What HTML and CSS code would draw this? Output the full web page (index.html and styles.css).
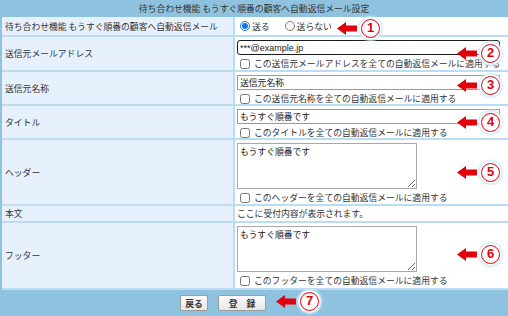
FILE: index.html
```html
<!DOCTYPE html>
<html lang="ja">
<head>
<meta charset="utf-8">
<link rel="stylesheet" href="styles.css">
</head>
<body>
<div class="page">
  <div class="title">待ち合わせ機能 もうすぐ順番の顧客へ自動返信メール設定</div>
  <div class="form">
    <div class="label">待ち合わせ機能 もうすぐ順番の顧客へ自動返信メール</div>
    <div class="field inline">
      <label class="opt"><input type="radio" name="send" checked>送る</label>
      <label class="opt"><input type="radio" name="send">送らない</label>
    </div>

    <div class="label">送信元メールアドレス</div>
    <div class="field">
      <input class="text focus" type="text" value="***@example.jp">
      <label class="chk"><input type="checkbox">この送信元メールアドレスを全ての自動返信メールに適用する</label>
    </div>

    <div class="label">送信元名称</div>
    <div class="field">
      <input class="text" type="text" value="送信元名称">
      <label class="chk"><input type="checkbox">この送信元名称を全ての自動返信メールに適用する</label>
    </div>

    <div class="label">タイトル</div>
    <div class="field">
      <input class="text" type="text" value="もうすぐ順番です">
      <label class="chk"><input type="checkbox">このタイトルを全ての自動返信メールに適用する</label>
    </div>

    <div class="label">ヘッダー</div>
    <div class="field">
      <textarea class="area">もうすぐ順番です</textarea>
      <label class="chk"><input type="checkbox">このヘッダーを全ての自動返信メールに適用する</label>
    </div>

    <div class="label">本文</div>
    <div class="field inline">ここに受付内容が表示されます。</div>

    <div class="label">フッター</div>
    <div class="field">
      <textarea class="area">もうすぐ順番です</textarea>
      <label class="chk"><input type="checkbox">このフッターを全ての自動返信メールに適用する</label>
    </div>
  </div>
  <div class="footer">
    <button class="btn" type="button">戻る</button>
    <button class="btn wide" type="button">登　録</button>
  </div>

  <div class="note n1"><svg class="arrow" viewBox="0 0 20 13"><polygon points="0,6.5 9,0 9,3.5 20,3.5 20,9.5 9,9.5 9,13"/></svg><span class="num">1</span></div>
  <div class="note n2"><svg class="arrow" viewBox="0 0 20 13"><polygon points="0,6.5 9,0 9,3.5 20,3.5 20,9.5 9,9.5 9,13"/></svg><span class="num">2</span></div>
  <div class="note n3"><svg class="arrow" viewBox="0 0 20 13"><polygon points="0,6.5 9,0 9,3.5 20,3.5 20,9.5 9,9.5 9,13"/></svg><span class="num">3</span></div>
  <div class="note n4"><svg class="arrow" viewBox="0 0 20 13"><polygon points="0,6.5 9,0 9,3.5 20,3.5 20,9.5 9,9.5 9,13"/></svg><span class="num">4</span></div>
  <div class="note n5"><svg class="arrow" viewBox="0 0 20 13"><polygon points="0,6.5 9,0 9,3.5 20,3.5 20,9.5 9,9.5 9,13"/></svg><span class="num">5</span></div>
  <div class="note n6"><svg class="arrow" viewBox="0 0 20 13"><polygon points="0,6.5 9,0 9,3.5 20,3.5 20,9.5 9,9.5 9,13"/></svg><span class="num">6</span></div>
  <div class="note n7"><svg class="arrow" viewBox="0 0 20 13"><polygon points="0,6.5 9,0 9,3.5 20,3.5 20,9.5 9,9.5 9,13"/></svg><span class="num">7</span></div>
</div>
</body>
</html>
```
FILE: styles.css
```css
* { box-sizing: border-box; }
html, body { margin: 0; padding: 0; }
body {
  width: 508px;
  height: 316px;
  overflow: hidden;
  background: #8fc2df;
  font-family: "Noto Sans CJK JP", "Noto Sans", sans-serif;
  font-size: 8.8px;
  color: #333;
}
.page {
  position: relative;
  display: flex;
  flex-direction: column;
  height: 316px;
}
.title {
  height: 17px;
  display: flex;
  align-items: center;
  justify-content: center;
  color: #333;
}
.form {
  display: grid;
  grid-template-columns: 231px 1fr;
  grid-template-rows: 18px 33px 32px 32px 64px 15px 65px;
  gap: 2px;
  background: #bcdcf2;
  margin-left: 2px;
  padding-bottom: 2px;
}
.label {
  background: #e6f1fd;
  display: flex;
  align-items: center;
  padding-left: 3px;
  white-space: nowrap;
}
.field {
  background: #fff;
  display: flex;
  flex-direction: column;
  padding: 3px 2px 0;
  gap: 3px;
}
.field.inline {
  flex-direction: row;
  align-items: center;
  padding: 0 2px;
  gap: 0;
}
.opt {
  display: flex;
  align-items: center;
  margin-left: 3px;
  margin-right: 12px;
}
.opt input {
  width: 10px;
  height: 10px;
  margin: 0 2px 0 0;
  accent-color: #1a73e8;
}
.text {
  width: 263px;
  height: 15px;
  border: 1px solid #9a9a9a;
  border-radius: 0;
  padding: 0 2px;
  font-family: "Noto Sans CJK JP", "Noto Sans", sans-serif;
  font-size: 8.8px;
  color: #222;
  background: #fff;
}
.text.focus {
  border: 1.5px solid #1b1b1b;
  border-radius: 3px;
  font-family: "Liberation Sans", sans-serif;
  font-size: 9px;
}
.chk {
  display: flex;
  align-items: center;
  white-space: nowrap;
  height: 11px;
}
.chk input {
  width: 10px;
  height: 10px;
  margin: 0 4px 0 3px;
}
.area {
  width: 180px;
  height: 46px;
  border: 1px solid #a8a8a8;
  padding: 1px 2px;
  font-family: "Noto Sans CJK JP", "Noto Sans", sans-serif;
  font-size: 8.8px;
  color: #222;
  resize: both;
}
.footer {
  flex: 1;
  display: flex;
  align-items: center;
  padding-left: 180px;
  gap: 10px;
}
.btn {
  height: 16px;
  width: 28px;
  padding: 0;
  border: 1px solid #9c9c9c;
  border-radius: 2px;
  background: linear-gradient(#fdfdfd, #e6e6e6);
  font-family: "Noto Sans CJK JP", "Noto Sans", sans-serif;
  font-size: 8.8px;
  font-weight: bold;
  color: #333;
}
.btn.wide { width: 48px; }

.note {
  position: absolute;
  display: flex;
  align-items: center;
  gap: 4px;
}
.arrow {
  width: 20px;
  height: 13px;
  fill: #e0000b;
}
.num {
  width: 19px;
  height: 19px;
  border: 1.6px solid #e0000b;
  border-radius: 50%;
  background: #fff;
  color: #e0000b;
  font-family: "Liberation Sans", sans-serif;
  font-weight: bold;
  font-size: 13px;
  line-height: 16px;
  text-align: center;
  box-shadow: 0 0 0 1.5px #fff, 0 0 2px 3px #cfeaf8;
}
.n1 { left: 337px; top: 19px; }
.n2 { left: 457px; top: 44px; }
.n3 { left: 457px; top: 76px; }
.n4 { left: 457px; top: 113px; }
.n5 { left: 457px; top: 163px; }
.n6 { left: 457px; top: 245px; }
.n7 { left: 276px; top: 292px; }
```
